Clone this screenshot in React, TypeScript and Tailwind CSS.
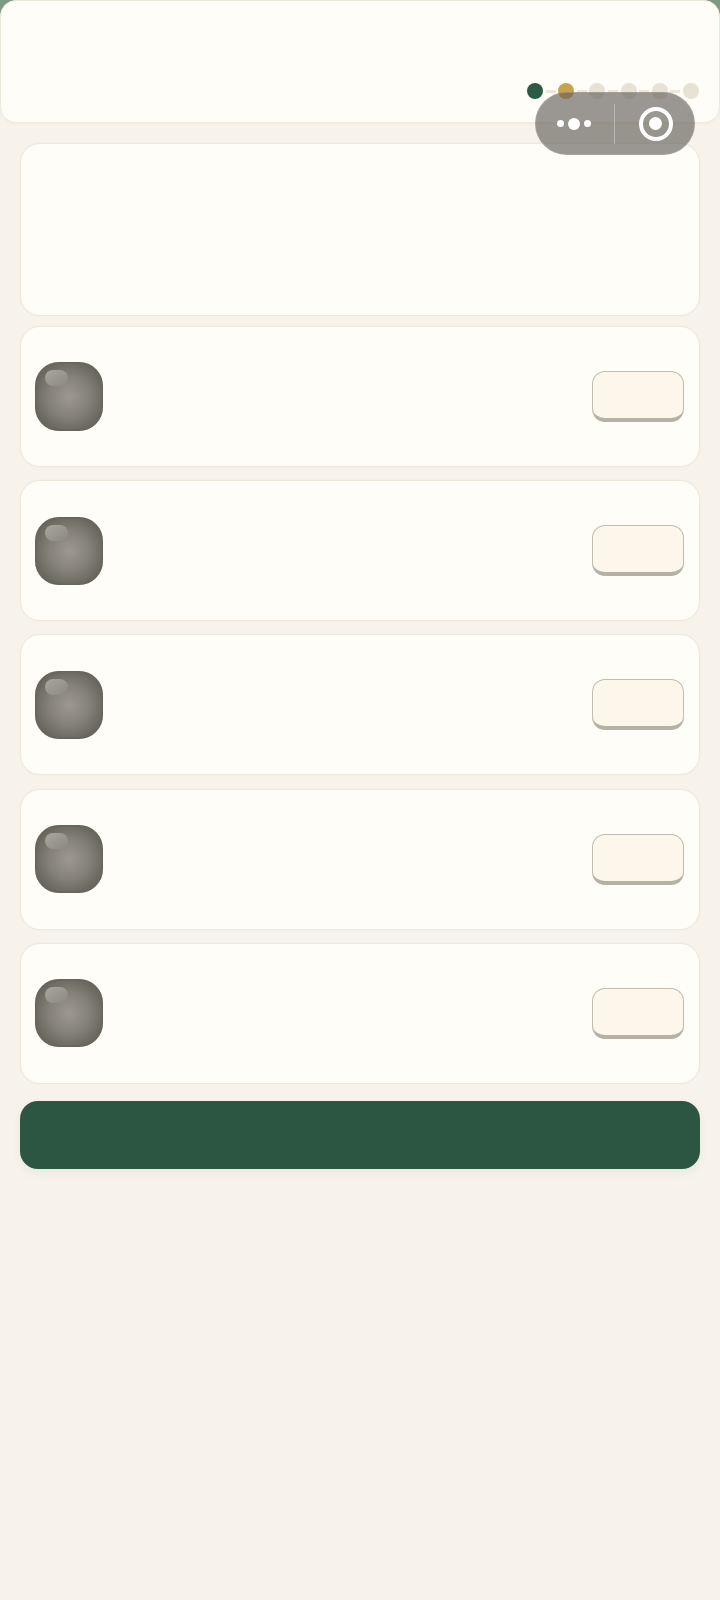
export default function App() {
  const rows = [0, 1, 2, 3, 4];
  const dots = ["bg-[#2d5a45]", "bg-[#c9a24a]", "bg-[#e8e2d4]", "bg-[#e8e2d4]", "bg-[#e8e2d4]", "bg-[#e8e2d4]"];
  return (
    <div className="relative h-[1600px] w-[720px] overflow-hidden bg-[#f7f3eb]">
      <div className="bg-[linear-gradient(to_bottom,#7f9a80_0px,#7f9a80_40px,#f7f3eb_40px)]">
        <div className="flex h-[123px] flex-col items-end justify-end rounded-[16px] border border-[#ede9dd] bg-[#fffdf8] pb-[23px] pr-[20px] shadow-[0_1px_2px_rgba(120,100,60,0.05)]">
          <div className="flex items-center">
            {dots.map((d, i) => (
              <div key={i} className="flex items-center">
                {i > 0 && <div className="mx-[2.6px] h-[3px] w-[10px] bg-[#ece7da]" />}
                <div className={`h-[16px] w-[16px] rounded-full ${d}`} />
              </div>
            ))}
          </div>
        </div>
      </div>
      <div className="flex flex-col px-[19.6px] pt-[20px]">
        <div className="h-[173px] rounded-[20px] border border-[#ede9dd] bg-[#fffdf8] shadow-[0_0_0_1px_rgba(237,233,221,0.3)]" />
        <div className="mt-[10px] flex flex-col gap-[13.2px]">
          {rows.map((r) => (
            <div key={r} className="flex h-[141px] items-center justify-between rounded-[20px] border border-[#ede9dd] bg-[#fffdf8] pl-[14.6px] pr-[15px] shadow-[0_0_0_1px_rgba(237,233,221,0.3)]">
              <div className="relative h-[68.2px] w-[68px] rounded-[24px] bg-[radial-gradient(circle_at_50%_50%,#9d9990_0%,#84817a_42%,#6b6860_72%)] shadow-[inset_0_0_2px_rgba(70,68,62,0.5)]">
                <div className="absolute left-[10px] top-[8px] h-[16px] w-[23px] rounded-[9px] bg-[linear-gradient(to_bottom_right,#a9a69f,#8b8880)] blur-[0.6px]" />
              </div>
              <div className="h-[51px] w-[92px] rounded-[13px] border border-[#c0bcb0] border-b-[4px] border-b-[#b5b1a4] bg-[#fdf6ea]" />
            </div>
          ))}
        </div>
        <div className="mt-[17px] h-[68px] rounded-[18px] bg-[#2c5641] shadow-[0_4px_10px_rgba(45,85,69,0.07)]" />
      </div>
      <div className="absolute left-[535px] top-[92px] flex h-[63px] w-[160px] items-center rounded-full border border-[rgba(190,186,175,0.35)] bg-[rgba(100,97,90,0.65)]">
        <div className="flex h-[40px] w-[79px] items-center justify-center gap-[4px] border-r border-[rgba(255,255,255,0.3)] pr-[2px]">
          <div className="h-[7px] w-[7px] rounded-full bg-white" />
          <div className="h-[12px] w-[12px] rounded-full bg-white" />
          <div className="h-[7px] w-[7px] rounded-full bg-white" />
        </div>
        <div className="flex flex-1 items-center justify-center pl-[2px]">
          <div className="flex h-[34px] w-[34px] items-center justify-center rounded-full border-[4px] border-white">
            <div className="h-[13px] w-[13px] rounded-full bg-white" />
          </div>
        </div>
      </div>
    </div>
  );
}
